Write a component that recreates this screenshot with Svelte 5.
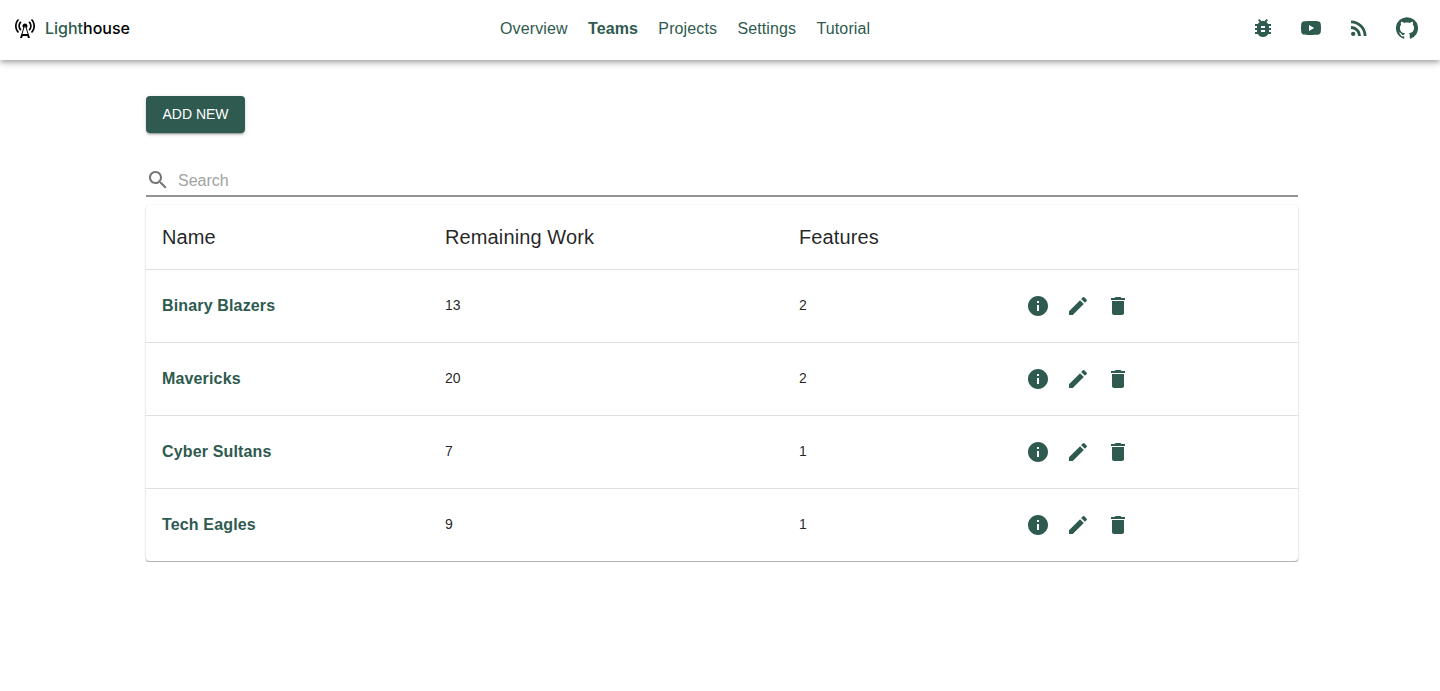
<script>
const teams = [
    { name: 'Binary Blazers', work: 13, features: 2 },
    { name: 'Mavericks', work: 20, features: 2 },
    { name: 'Cyber Sultans', work: 7, features: 1 },
    { name: 'Tech Eagles', work: 9, features: 1 }
];

const nav = ['Overview', 'Teams', 'Projects', 'Settings', 'Tutorial'];

const links = [
    { label: 'bug', d: 'M20 8h-2.81c-.45-.78-1.07-1.45-1.82-1.96L17 4.41 15.59 3l-2.17 2.17C12.96 5.06 12.49 5 12 5c-.49 0-.96.06-1.41.17L8.41 3 7 4.41l1.62 1.63C7.88 6.55 7.26 7.22 6.81 8H4v2h2.09c-.05.33-.09.66-.09 1v1H4v2h2v1c0 .34.04.67.09 1H4v2h2.81c1.04 1.79 2.97 3 5.19 3s4.15-1.21 5.19-3H20v-2h-2.09c.05-.33.09-.66.09-1v-1h2v-2h-2v-1c0-.34-.04-.67-.09-1H20V8zm-6 8h-4v-2h4v2zm0-4h-4v-2h4v2z' },
    { label: 'youtube', d: 'M10 15l5.19-3L10 9v6m11.56-7.83c.13.47.22 1.1.28 1.9.07.8.1 1.49.1 2.09L22 12c0 2.19-.16 3.8-.44 4.83-.25.9-.83 1.48-1.73 1.73-.47.13-1.33.22-2.65.28-1.3.07-2.49.1-3.59.1L12 19c-4.19 0-6.8-.16-7.83-.44-.9-.25-1.48-.83-1.73-1.73-.13-.47-.22-1.1-.28-1.9-.07-.8-.1-1.49-.1-2.09L2 12c0-2.19.16-3.8.44-4.83.25-.9.83-1.48 1.73-1.73.47-.13 1.33-.22 2.65-.28 1.3-.07 2.49-.1 3.59-.1L12 5c4.19 0 6.8.16 7.83.44.9.25 1.48.83 1.73 1.73z' },
    { label: 'rss', d: 'M4 4.44v2.83c7.03 0 12.73 5.7 12.73 12.73h2.83c0-8.59-6.97-15.56-15.56-15.56zm0 5.66v2.83c3.9 0 7.07 3.17 7.07 7.07h2.83c0-5.47-4.43-9.9-9.9-9.9zM8.36 17.82a2.18 2.18 0 1 1-4.36 0 2.18 2.18 0 0 1 4.36 0z' },
    { label: 'github', d: 'M12 1.27a11 11 0 00-3.48 21.46c.55.09.73-.28.73-.55v-1.84c-3.03.64-3.67-1.46-3.67-1.46-.55-1.29-1.28-1.65-1.28-1.65-.92-.65.1-.65.1-.65 1.1 0 1.73 1.1 1.73 1.1.92 1.65 2.57 1.2 3.21.92a2 2 0 01.64-1.47c-2.47-.27-5.04-1.19-5.04-5.5 0-1.1.46-2.1 1.2-2.84a3.76 3.76 0 010-2.93s.91-.28 3.11 1.1c1.8-.49 3.7-.49 5.5 0 2.1-1.38 3.02-1.1 3.02-1.1a3.76 3.76 0 010 2.93c.83.74 1.2 1.74 1.2 2.94 0 4.21-2.57 5.13-5.04 5.4.45.37.82.92.82 2.02v3.03c0 .27.1.64.73.55A11 11 0 0012 1.27' }
];

const actions = [
    { label: 'info', d: 'M12 2C6.48 2 2 6.48 2 12s4.48 10 10 10 10-4.48 10-10S17.52 2 12 2zm1 15h-2v-6h2v6zm0-8h-2V7h2v2z' },
    { label: 'edit', d: 'M3 17.25V21h3.75L17.81 9.94l-3.75-3.75L3 17.25zM20.71 7.04c.39-.39.39-1.02 0-1.41l-2.34-2.34a.9959.9959 0 00-1.41 0l-1.83 1.83 3.75 3.75 1.83-1.83z' },
    { label: 'delete', d: 'M6 19c0 1.1.9 2 2 2h8c1.1 0 2-.9 2-2V7H6v12zM19 4h-3.5l-1-1h-5l-1 1H5v2h14V4z' }
];
</script>

<style>
:global(body) {
    font-family: "Liberation Sans", Arial, sans-serif;
    background: #fff;
}

header {
    height: 56px;
    display: grid;
    grid-template-columns: 487px auto 1fr;
    align-items: center;
    padding: 0 9px 4px 13px;
    background: #fff;
    box-shadow: 0 2px 4px -1px rgba(0,0,0,.2), 0 4px 5px 0 rgba(0,0,0,.14), 0 1px 10px 0 rgba(0,0,0,.12);
}

.logo {
    display: flex;
    align-items: center;
    gap: 8px;
    font-family: Inter, sans-serif;
    font-weight: 550;
    font-size: 16px;
    color: #000;
}

.logo svg {
    width: 24px;
    height: 24px;
    fill: #000;
}

.logo span span {
    color: #2e5a4f;
}

nav {
    display: flex;
    gap: 20.3px;
    margin-top: 2px;
    font-size: 16px;
    letter-spacing: .12px;
    color: #2e5a4f;
}

nav .active {
    font-weight: 700;
}

.links {
    display: flex;
    justify-content: flex-end;
}

.links button, .actions button {
    width: 48px;
    height: 48px;
    padding: 0;
    border: 0;
    background: none;
    display: flex;
    align-items: center;
    justify-content: center;
}

.links svg {
    width: 24px;
    height: 24px;
    fill: #2e5a4f;
}

main {
    width: 1152px;
    margin-left: 146px;
    padding-top: 36px;
}

.add {
    display: block;
    height: 37px;
    width: 99px;
    padding: 0 0 2px;
    border: 0;
    border-radius: 4px;
    background: #2e5a4f;
    color: #fff;
    font-family: inherit;
    font-size: 14px;
    font-weight: 400;
    box-shadow: 0 3px 1px -2px rgba(0,0,0,.2), 0 2px 2px 0 rgba(0,0,0,.14), 0 1px 5px 0 rgba(0,0,0,.12);
}

.search {
    margin-top: 32px;
    height: 30px;
    display: flex;
    align-items: center;
    gap: 8px;
    border-bottom: 2px solid #949494;
}

.search svg {
    width: 24px;
    height: 24px;
    fill: #757575;
}

.search span {
    padding-top: 2px;
    font-size: 16px;
    color: #a2a2a2;
}

.card {
    margin-top: 8px;
    border-radius: 4px;
    overflow: hidden;
    background: #fff;
    border-bottom: 1px solid #b4b4b4;
    box-shadow: 0 1px 2px rgba(0,0,0,.25), 0 0 2px rgba(0,0,0,.06);
}

table {
    width: 100%;
    table-layout: fixed;
    border-collapse: collapse;
    color: rgba(0,0,0,.87);
}

th, td {
    padding: 0 16px;
    text-align: left;
    border-bottom: 1px solid #e0e0e0;
}

tbody tr:last-child td {
    border-bottom: 0;
}

th {
    height: 64px;
    font-size: 20px;
    font-weight: 400;
    letter-spacing: .12px;
}

td {
    height: 72px;
    font-size: 14px;
}

td.num {
    height: 70px;
    padding-bottom: 2px;
}

td.name {
    font-size: 16px;
    font-weight: 700;
    letter-spacing: .15px;
    color: #2e5a4f;
}

.actions {
    display: flex;
}

.actions button {
    width: 40px;
    height: 40px;
}

.actions svg {
    width: 24px;
    height: 24px;
    fill: #2e5a4f;
}
</style>

<header>
    <div class="logo">
        <svg viewBox="0 0 24 24"><path d="M7.3 14.7l1.2-1.2c-1-1-1.5-2.3-1.5-3.5 0-1.3.5-2.6 1.5-3.5L7.3 5.3c-1.3 1.3-2 3-2 4.7s.7 3.4 2 4.7zM19.1 2.9l-1.2 1.2c1.6 1.6 2.4 3.8 2.4 5.9 0 2.1-.8 4.3-2.4 5.9l1.2 1.2c2-2 2.9-4.5 2.9-7.1 0-2.6-1-5.1-2.9-7.1zM6.1 4.1 4.9 2.9C3 4.9 2 7.4 2 10c0 2.6 1 5.1 2.9 7.1l1.2-1.2C4.5 14.3 3.7 12.1 3.7 10c0-2.1.8-4.3 2.4-5.9zM16.7 14.7c1.3-1.3 2-3 2-4.7-.1-1.7-.7-3.4-2-4.7l-1.2 1.2c1 1 1.5 2.3 1.5 3.5 0 1.3-.5 2.6-1.5 3.5l1.2 1.2zM14.5 10c0-1.38-1.12-2.5-2.5-2.5S9.5 8.62 9.5 10c0 .76.34 1.42.87 1.88L7 22h2l.67-2h4.67l.66 2h2l-3.37-10.12c.53-.46.87-1.12.87-1.88zm-5.17 8L12 10l2.67 8H9.33z" /></svg>
        <span><span>Light</span>house</span>
    </div>
    <nav>
        {#each nav as item}
            <div class:active={item == 'Teams'}>{item}</div>
        {/each}
    </nav>
    <div class="links">
        {#each links as link}
            <button aria-label={link.label}><svg viewBox="0 0 24 24"><path d={link.d} /></svg></button>
        {/each}
    </div>
</header>

<main>
    <button class="add">ADD NEW</button>

    <div class="search">
        <svg viewBox="0 0 24 24"><path d="M15.5 14h-.79l-.28-.27C15.41 12.59 16 11.11 16 9.5 16 5.91 13.09 3 9.5 3S3 5.91 3 9.5 5.91 16 9.5 16c1.61 0 3.09-.59 4.23-1.57l.27.28v.79l5 4.99L20.49 19l-4.99-5zm-6 0C7.01 14 5 11.99 5 9.5S7.01 5 9.5 5 14 7.01 14 9.5 11.99 14 9.5 14z" /></svg>
        <span>Search</span>
    </div>

    <div class="card">
        <table>
            <colgroup>
                <col style="width: 283px" />
                <col style="width: 354px" />
                <col style="width: 219px" />
                <col />
            </colgroup>
            <thead>
                <tr>
                    <th>Name</th>
                    <th>Remaining Work</th>
                    <th>Features</th>
                    <th></th>
                </tr>
            </thead>
            <tbody>
                {#each teams as team}
                    <tr>
                        <td class="name">{team.name}</td>
                        <td class="num">{team.work}</td>
                        <td class="num">{team.features}</td>
                        <td>
                            <div class="actions">
                                {#each actions as action}
                                    <button aria-label={action.label}><svg viewBox="0 0 24 24"><path d={action.d} /></svg></button>
                                {/each}
                            </div>
                        </td>
                    </tr>
                {/each}
            </tbody>
        </table>
    </div>
</main>
